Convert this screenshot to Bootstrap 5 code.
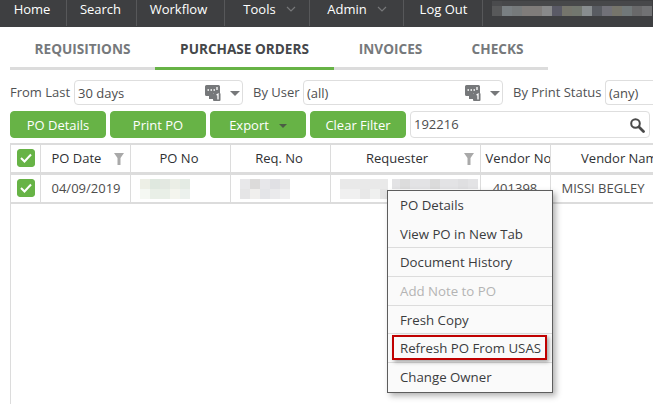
<!DOCTYPE html>
<html lang="en"><head><meta charset="utf-8"><title>Purchase Orders</title>
<link href="https://cdn.jsdelivr.net/npm/bootstrap@5.3.0/dist/css/bootstrap.min.css" rel="stylesheet">
<style>
html,body{width:653px;height:404px;overflow:hidden;background:#fff}
body{font-family:"Open Sans","Noto Sans",sans-serif;font-size:13px;color:#4d4d4d;position:relative}
.topbar{height:27px;background:#3e3f41;color:#fff;flex-wrap:nowrap}
.topitem{height:26px;line-height:18px;border-right:1px solid #57585a;text-align:center;color:#fff;font-size:13px;flex:none}
.ti-home{width:67px;padding-right:2px}
.ti-search{width:70px;padding-right:2px}
.ti-flow{width:88px;padding-right:4px}
.ti-tools{width:85px;padding-left:5px}
.ti-admin{width:94px;padding-left:1px}
.ti-out{width:79px;padding-left:1px}
.chev{display:inline-block;margin-left:10px;vertical-align:2px}
.blur-top{margin:1px 0 0 9px;flex:none}
.tabsrow{height:43px;margin:0 105px 0 10px;border-bottom:3px solid #dcdcdc;font-weight:700;font-size:13.6px;color:#76797c}
.tabcell{margin-bottom:-3px;height:43px;padding-top:12px;text-align:center;flex:none;border-bottom:3px solid transparent}
.tabcell.on{color:#45474a;border-bottom-color:#67b346}
.tc-req{width:145px}.tc-po{width:179px}.tc-inv{width:113px}.tc-chk{width:101px}
.filters{height:25px;margin:10px 0 0 10px;white-space:nowrap}
.lbl{font-size:13px;color:#505254;flex:none;padding-top:1px}
.lb-from{width:64px}.lb-user{width:50px;margin-left:10px}.lb-print{width:92px;margin-left:10px}
.pick{height:25px;border:1px solid #dedede;border-radius:4px;padding:0 0 0 3px;line-height:25px;font-size:13px;color:#4d4d4d;flex:none;background:#fff}
.pk-days{width:169px}.pk-user{width:200px}.pk-any{width:60px;border-right:0;border-radius:4px 0 0 4px}
.ctl{margin-left:auto;flex:none}
.tools{margin:6px 0 0 10px;gap:4px;height:27px}
.gbtn{--bs-btn-bg:#67b346;--bs-btn-border-color:#67b346;--bs-btn-color:#fff;--bs-btn-hover-bg:#67b346;--bs-btn-hover-color:#fff;--bs-btn-border-radius:4px;--bs-btn-padding-y:0;--bs-btn-padding-x:0;--bs-btn-font-size:13px;--bs-btn-line-height:27px;width:96px;height:27px}
.caretdn{display:inline-block;width:0;height:0;border:4px solid transparent;border-top-color:#4b5d44;border-bottom:0;margin-left:10px;vertical-align:2px}
.searchbox{width:240px;height:27px;border:1px solid #dedede;border-radius:4px;padding:0 4px 0 3px;color:#4d4d4d}
.gridwrap{margin:5px 0 0 10px;width:643px;height:261px;border-left:1px solid #dcdcdc;overflow:hidden}
.potable{table-layout:fixed;width:687px;margin:0;font-size:13px;--bs-table-color:#4d4d4d;--bs-table-border-color:#dcdcdc;border-top:2px solid #dcdcdc}
.c1{width:29px}.c2{width:90px}.c3,.c4{width:100px}.c5{width:150px}.c6{width:70px}.c7{width:148px}
.potable th{height:29px;font-weight:400;color:#2f3133;padding:1px 2px 0 0;text-align:center;vertical-align:middle;border-bottom:3px solid #dcdcdc;border-right:1px solid #dcdcdc;position:relative;white-space:nowrap;overflow:hidden}
.potable td{height:30px;padding:1px 0 0;vertical-align:middle;text-align:center;border-bottom:2px solid #dcdcdc;border-right:1px solid #dcdcdc;white-space:nowrap;overflow:hidden}
.potable th.th-check,.potable td.td-check{padding:0 0 0 1px}
.potable th.th-date,.potable td.td-date{text-align:left;padding-left:11px}
.potable th.th-req{padding-right:16px}
.potable th.th-vno{text-align:left;padding-left:5px;padding-right:0;letter-spacing:.1px}
.potable td.td-name{text-align:left;padding-left:11px}
.tick{display:block;margin:0 auto;border-radius:3px}
.funnel{position:absolute;right:6px;top:8px}
.mosaic{margin-left:9px}
.ctxmenu{position:absolute;left:387px;top:190px;width:166px;height:203px;background:#fafafa;border:1px solid #5d5d5d;box-shadow:3px 3px 6px rgba(0,0,0,.3);padding:0;z-index:5}
.ctxitem{height:28.7px;line-height:28px;padding:0 12px;font-size:13.25px;color:#3a3c3e;white-space:nowrap;position:relative}
.ctxitem.sep{border-bottom:1px solid #dcdcdc}
.ctxitem.off{color:#b4b4b4}
.redbox{position:absolute;left:4px;top:1px;width:155px;height:25px;border:2px solid #c00000;box-shadow:2px 2px 4px rgba(0,0,0,.35);pointer-events:none}
svg{display:block}
svg.chev{display:inline-block}
</style></head><body>
<div class="topbar d-flex">
<div class="topitem ti-home">Home</div>
<div class="topitem ti-search">Search</div>
<div class="topitem ti-flow">Workflow</div>
<div class="topitem ti-tools">Tools<svg class="chev" width="10" height="6" viewBox="0 0 10 6"><path d="M1 1l4 4 4-4" fill="none" stroke="#77787a" stroke-width="1.2"/></svg></div>
<div class="topitem ti-admin">Admin<svg class="chev" width="10" height="6" viewBox="0 0 10 6"><path d="M1 1l4 4 4-4" fill="none" stroke="#77787a" stroke-width="1.2"/></svg></div>
<div class="topitem ti-out">Log Out</div>
<svg class="blur-top" width="160" height="15" viewBox="0 0 160 15"><g>
<rect x="0" y="0" width="10" height="15" fill="#4a4b4d"/>
<rect x="10" y="0" width="150" height="5" fill="#47484a"/>
<rect x="0" y="5" width="10" height="10" fill="#58595a"/>
<rect x="10" y="5" width="10" height="10" fill="#797f82"/><rect x="20" y="5" width="10" height="10" fill="#767a7b"/><rect x="30" y="5" width="20" height="10" fill="#7f7c7a"/><rect x="50" y="5" width="10" height="10" fill="#88898a"/><rect x="60" y="5" width="10" height="10" fill="#5a5a66"/><rect x="70" y="5" width="10" height="10" fill="#75756c"/><rect x="80" y="5" width="10" height="10" fill="#72776f"/><rect x="90" y="5" width="10" height="10" fill="#888d8f"/><rect x="100" y="5" width="10" height="10" fill="#595c62"/><rect x="110" y="5" width="10" height="10" fill="#717178"/><rect x="120" y="5" width="10" height="10" fill="#76756b"/><rect x="130" y="5" width="10" height="10" fill="#717879"/><rect x="140" y="5" width="10" height="10" fill="#69696a"/><rect x="150" y="5" width="10" height="10" fill="#717274"/>
</g></svg>
</div>
<div class="tabsrow d-flex">
<div class="tabcell tc-req">REQUISITIONS</div>
<div class="tabcell tc-po on">PURCHASE ORDERS</div>
<div class="tabcell tc-inv">INVOICES</div>
<div class="tabcell tc-chk">CHECKS</div>
</div>
<div class="filters d-flex align-items-center">
<span class="lbl lb-from">From Last</span>
<div class="pick pk-days d-flex"><span>30 days</span><span class="ctl"><svg width="38" height="23" viewBox="0 0 38 23"><path d="M1 5.500a1.500 1.500 0 0 1 1.500-1.500h12a1.500 1.500 0 0 1 1.500 1.500v6.500h-7v6H5v-3H2.500A1.500 1.500 0 0 1 1 13.500z" fill="#76787a"/><rect x="9" y="12" width="7.500" height="8" rx="1" fill="#76787a"/><path d="M3.500 9h1.500M6.500 9h1.500M9.500 9h1.500M13 6v3" stroke="#fff" stroke-width="1.300"/><path d="M12.500 14l1.500-.8v5.300" stroke="#fff" stroke-width="1.300" fill="none"/><path d="M26 10h10l-5 5z" fill="#76787a"/></svg></span></div>
<span class="lbl lb-user">By User</span>
<div class="pick pk-user d-flex"><span>(all)</span><span class="ctl"><svg width="38" height="23" viewBox="0 0 38 23"><path d="M1 5.500a1.500 1.500 0 0 1 1.500-1.500h12a1.500 1.500 0 0 1 1.500 1.500v6.500h-7v6H5v-3H2.500A1.500 1.500 0 0 1 1 13.500z" fill="#76787a"/><rect x="9" y="12" width="7.500" height="8" rx="1" fill="#76787a"/><path d="M3.500 9h1.500M6.500 9h1.500M9.500 9h1.500M13 6v3" stroke="#fff" stroke-width="1.300"/><path d="M12.500 14l1.500-.8v5.300" stroke="#fff" stroke-width="1.300" fill="none"/><path d="M26 10h10l-5 5z" fill="#76787a"/></svg></span></div>
<span class="lbl lb-print">By Print Status</span>
<div class="pick pk-any">(any)</div>
</div>
<div class="tools d-flex">
<button type="button" class="btn gbtn">PO Details</button>
<button type="button" class="btn gbtn">Print PO</button>
<button type="button" class="btn gbtn">Export<span class="caretdn"></span></button>
<button type="button" class="btn gbtn">Clear Filter</button>
<div class="searchbox d-flex justify-content-between align-items-center"><span>192216</span><svg width="16" height="16" viewBox="0 0 16 16"><circle cx="6.500" cy="6.500" r="4.300" fill="none" stroke="#4a4a4a" stroke-width="2"/><path d="M10 10l4.500 4.500" stroke="#4a4a4a" stroke-width="2.800" stroke-linecap="round"/></svg></div>
</div>
<div class="gridwrap">
<table class="table potable">
<colgroup><col class="c1"><col class="c2"><col class="c3"><col class="c4"><col class="c5"><col class="c6"><col class="c7"></colgroup>
<thead><tr>
<th class="th-check"><svg class="tick" width="18" height="18" viewBox="0 0 18 18"><rect width="18" height="18" rx="2.500" fill="#67b346"/><path d="M4 9l3.500 3.500L14 5.500" fill="none" stroke="#fff" stroke-width="2"/></svg></th>
<th class="th-date">PO Date<svg class="funnel" width="10" height="12" viewBox="0 0 10 12"><path d="M0 0h10L6.500 5v7h-3V5z" fill="#a9a9a9"/></svg></th>
<th>PO No</th><th>Req. No</th>
<th class="th-req">Requester<svg class="funnel" width="10" height="12" viewBox="0 0 10 12"><path d="M0 0h10L6.500 5v7h-3V5z" fill="#a9a9a9"/></svg></th>
<th class="th-vno">Vendor No</th>
<th>Vendor Name</th>
</tr></thead>
<tbody><tr>
<td class="td-check"><svg class="tick" width="18" height="18" viewBox="0 0 18 18"><rect width="18" height="18" rx="2.500" fill="#67b346"/><path d="M4 9l3.500 3.500L14 5.500" fill="none" stroke="#fff" stroke-width="2"/></svg></td>
<td class="td-date">04/09/2019</td>
<td><svg class="mosaic" width="50" height="20" viewBox="0 0 50 20"><rect width="10" height="10" fill="#edefe6"/><rect x="10" width="10" height="10" fill="#dfe8df"/><rect x="20" width="10" height="10" fill="#e3e8e1"/><rect x="30" width="10" height="10" fill="#ebeee6"/><rect x="40" width="10" height="10" fill="#e4ebe4"/><rect y="10" width="10" height="10" fill="#f5f8f3"/><rect x="10" y="10" width="10" height="10" fill="#e9efe7"/><rect x="20" y="10" width="10" height="10" fill="#e9efe7"/><rect x="30" y="10" width="10" height="10" fill="#f4f5ee"/><rect x="40" y="10" width="10" height="10" fill="#ecf1ed"/></svg></td>
<td><svg class="mosaic" width="50" height="20" viewBox="0 0 50 20"><rect width="10" height="10" fill="#e8e8ea"/><rect x="10" width="10" height="10" fill="#dcdbda"/><rect x="20" width="10" height="10" fill="#e7e7ea"/><rect x="30" width="10" height="10" fill="#e0e0e4"/><rect x="40" width="10" height="10" fill="#e7e7e8"/><rect y="10" width="10" height="10" fill="#e5e5e6"/><rect x="10" y="10" width="10" height="10" fill="#f0efed"/><rect x="20" y="10" width="10" height="10" fill="#e4e5e8"/><rect x="30" y="10" width="10" height="10" fill="#eaeaec"/><rect x="40" y="10" width="10" height="10" fill="#efeff0"/></svg></td>
<td><svg class="mosaic" width="138" height="20" viewBox="0 0 138 20"><rect width="48" height="10" fill="#e9e9e9"/><rect y="10" width="20" height="10" fill="#f0f0f0"/><rect x="20" y="10" width="10" height="10" fill="#e8e8e8"/><rect x="30" y="10" width="10" height="10" fill="#eff0ef"/><rect x="40" y="10" width="8" height="10" fill="#e4e4e4"/><rect x="52" y="0" width="86" height="10" fill="#e3e3e5"/><rect x="60" y="0" width="10" height="10" fill="#dcdcdc"/><rect x="90" y="0" width="10" height="10" fill="#dbdbdb"/><rect x="118" y="0" width="10" height="10" fill="#dfdfe1"/></svg></td>
<td>401398</td>
<td class="td-name">MISSI BEGLEY</td>
</tr></tbody>
</table>
</div>
<div class="ctxmenu">
<div class="ctxitem">PO Details</div>
<div class="ctxitem sep">View PO in New Tab</div>
<div class="ctxitem sep">Document History</div>
<div class="ctxitem sep off">Add Note to PO</div>
<div class="ctxitem sep">Fresh Copy</div>
<div class="ctxitem sep">Refresh PO From USAS<span class="redbox"></span></div>
<div class="ctxitem">Change Owner</div>
</div>
</body></html>
